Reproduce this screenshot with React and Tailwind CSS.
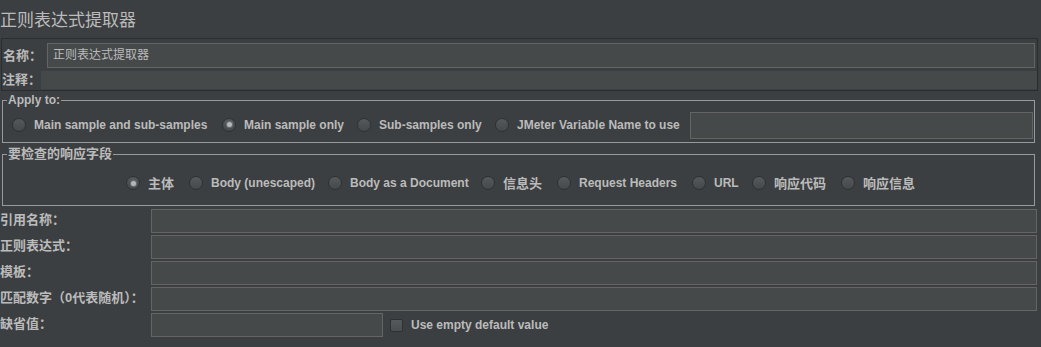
const font = { fontFamily: '"Liberation Sans", "Noto Sans CJK SC", sans-serif' };

const Radio = ({ label, checked, width, cjk }) => (
    <div className="flex items-center shrink-0" style={{ width }}>
        <span className="w-[14px] h-[14px] rounded-full border border-[#2e3032] bg-gradient-to-b from-[#55595c] to-[#45494b] flex items-center justify-center shrink-0">
            {checked && <span className="w-[5px] h-[5px] rounded-full bg-[#b4b6b8] shadow-[0_0_0_1px_#6a6e70]" />}
        </span>
        <span className={`ml-[8px] font-bold text-[#bbbbbb] whitespace-nowrap leading-none ${cjk ? 'text-[13px]' : 'text-[12px]'}`}>{label}</span>
    </div>
);

const Group = ({ title, cjk, className, children }) => (
    <div className={`relative mx-[2px] border border-[#98999a] ${className}`}>
        <span className={`absolute left-[4px] top-[-8px] px-[1px] bg-[#3c3f41] font-bold text-[#bbbbbb] leading-[14px] whitespace-nowrap ${cjk ? 'text-[13px]' : 'text-[12px]'}`}>
            {title}
        </span>
        {children}
    </div>
);

const FieldRow = ({ label, children }) => (
    <div className="flex items-center h-[24px] mb-[2px]">
        <div className="w-[151px] shrink-0 pb-[4px] text-[13px] font-bold text-[#bbbbbb] leading-none whitespace-nowrap">{label}</div>
        {children}
    </div>
);

const Input = ({ className }) => (
    <div className={`h-[24px] bg-[#45494a] border border-[#646464] ${className}`} />
);

const App = () => {
    return (
        <div className="w-[1041px] h-[347px] bg-[#3c3f41] overflow-hidden" style={font}>
            {/* title */}
            <div className="h-[38px] pt-[11px] text-[17px] text-[#bbbbbb] leading-[20px]">正则表达式提取器</div>

            {/* name / comment */}
            <div className="ml-[1px] w-[1037px] h-[53px] border border-[#2b2d2e] flex flex-col">
                <div className="flex items-center h-[31px] pt-[1px]">
                    <div className="w-[45px] pl-[1px] text-[13px] font-bold text-[#bbbbbb] leading-none">名称：</div>
                    <div className="w-[988px] h-[25px] bg-[#45494a] border border-[#646464] flex items-center pl-[5px] text-[12px] text-[#bbbbbb]">
                        正则表达式提取器
                    </div>
                </div>
                <div className="flex items-center h-[19px]">
                    <div className="w-[39px] text-[13px] font-bold text-[#bbbbbb] leading-none">注释：</div>
                    <div className="w-[996px] h-[18px] bg-[#45494a]" />
                </div>
            </div>

            {/* apply to */}
            <Group title="Apply to:" className="mt-[9px] w-[1033px] h-[43px] flex items-start pt-[11px] pl-[9px]">
                <div className="flex items-center h-[27px] -mt-[1px]">
                    <Radio label="Main sample and sub-samples" width={210} />
                    <Radio label="Main sample only" checked width={135} />
                    <Radio label="Sub-samples only" width={138} />
                    <Radio label="JMeter Variable Name to use" width={195} />
                    <div className="w-[343px] h-[27px] mt-[2px] bg-[#45494a] border border-[#646464]" />
                </div>
            </Group>

            {/* field to check */}
            <Group title="要检查的响应字段" cjk className="mt-[11px] w-[1033px] h-[52px] flex items-center pl-[123px] pt-[6px]">
                <Radio label="主体" cjk checked width={63} />
                <Radio label="Body (unescaped)" width={139} />
                <Radio label="Body as a Document" width={153} />
                <Radio label="信息头" cjk width={76} />
                <Radio label="Request Headers" width={135} />
                <Radio label="URL" width={60} />
                <Radio label="响应代码" cjk width={89} />
                <Radio label="响应信息" cjk width={80} />
            </Group>

            {/* fields */}
            <div className="mt-[3px]">
                <FieldRow label="引用名称：">
                    <Input className="w-[886px]" />
                </FieldRow>
                <FieldRow label="正则表达式：">
                    <Input className="w-[886px]" />
                </FieldRow>
                <FieldRow label="模板：">
                    <Input className="w-[886px]" />
                </FieldRow>
                <FieldRow label="匹配数字（0代表随机）：">
                    <Input className="w-[886px]" />
                </FieldRow>
                <FieldRow label="缺省值：">
                    <Input className="w-[232px]" />
                    <span className="ml-[7px] w-[13px] h-[13px] rounded-[2px] border border-[#2e3032] bg-gradient-to-b from-[#55595c] to-[#4a4e50]" />
                    <span className="ml-[8px] text-[12px] font-bold text-[#bbbbbb] leading-none">Use empty default value</span>
                </FieldRow>
            </div>
        </div>
    );
};

export default App;
